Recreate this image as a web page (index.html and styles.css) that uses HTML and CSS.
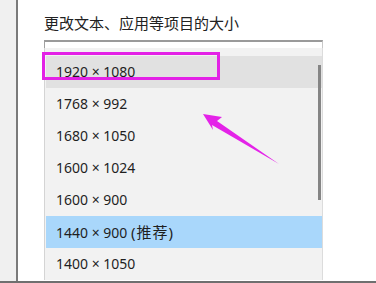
FILE: index.html
```html
<!DOCTYPE html>
<html lang="zh-CN">
<head>
<meta charset="utf-8">
<link rel="stylesheet" href="styles.css">
</head>
<body>
<div class="page">
  <div class="sidebar"></div>
  <div class="main">
    <div class="title">更改文本、应用等项目的大小</div>
    <div class="combo">
      <div class="combo-head"></div>
      <ul class="list">
        <li class="item hover">1920 × 1080</li>
        <li class="item">1768 × 992</li>
        <li class="item">1680 × 1050</li>
        <li class="item">1600 × 1024</li>
        <li class="item">1600 × 900</li>
        <li class="item selected">1440 × 900 <span class="rec">(推荐)</span></li>
        <li class="item">1400 × 1050</li>
      </ul>
      <div class="scrollbar"></div>
    </div>
  </div>
  <div class="mark"></div>
  <svg class="arrow" width="376" height="283" viewBox="0 0 376 283">
    <polygon points="203,114 222,117 217,121 279,164 212,125 213,130" fill="#e423e8"/>
  </svg>
</div>
</body>
</html>
```
FILE: styles.css
```css
html, body {
  margin: 0;
  padding: 0;
  background: #ffffff;
}
body {
  width: 376px;
  height: 283px;
  overflow: hidden;
  font-family: "Noto Sans", "Noto Sans CJK SC", sans-serif;
  color: #1b1b1b;
}
.page {
  position: relative;
  display: flex;
  height: 281px;
  border-bottom: 2px solid #6f6f6f;
  overflow: hidden;
}
.sidebar {
  width: 16px;
  background: #f0f0f0;
  border-right: 2px solid #7a7a7a;
  flex: none;
}
.main {
  flex: 1;
  padding-left: 26px;
}
.title {
  font-family: "Noto Sans CJK SC", sans-serif;
  font-size: 15px;
  line-height: 20px;
  padding-top: 13px;
  color: #222222;
}
.combo {
  position: relative;
  width: 279px;
  margin-top: 7px;
}
.combo-head {
  height: 6px;
  background: #ffffff;
  border-top: 2px solid #9a9a9a;
  border-left: 1px solid #a0a0a0;
  border-right: 1px solid #c8c8c8;
}
.list {
  list-style: none;
  margin: 0;
  padding: 8px 0 0 0;
  background: #f2f2f2;
  border-left: 1px solid #d4d4d4;
  border-right: 1px solid #dcdcdc;
}
.item {
  height: 32px;
  line-height: 32px;
  padding-left: 10px;
  font-size: 14px;
  margin-left: 1px;
  color: #1f1f1f;
}
.rec {
  letter-spacing: 1px;
  font-size: 15px;
}
.hover {
  background: #e1e1e1;
}
.selected {
  background: #a9d7fb;
}
.scrollbar {
  position: absolute;
  left: 274px;
  top: 25px;
  width: 3px;
  height: 135px;
  background: #858585;
}
.mark {
  position: absolute;
  left: 42px;
  top: 52px;
  width: 172px;
  height: 22px;
  border: 3px solid #e321e6;
}
.arrow {
  position: absolute;
  left: 0;
  top: 0;
  pointer-events: none;
}
```
